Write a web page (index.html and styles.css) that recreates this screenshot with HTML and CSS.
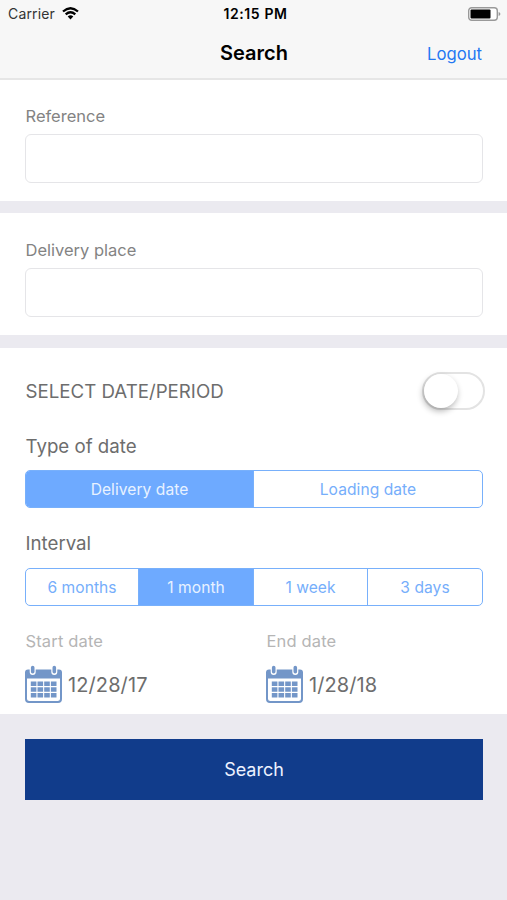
FILE: index.html
```html
<!DOCTYPE html>
<html lang="en">
<head>
<meta charset="utf-8">
<title>Search</title>
<link rel="stylesheet" href="styles.css">
</head>
<body>
<svg class="defs" width="0" height="0" aria-hidden="true">
  <symbol id="calendar" viewBox="0 0 37 38">
    <path fill-rule="evenodd" d="M3 4.500H34Q37 4.500 37 7.500V34Q37 38 33 38H4Q0 38 0 34V7.500Q0 4.500 3 4.500ZM2 13.500V33.500Q2 36 4.500 36H32.500Q35 36 35 33.500V13.500Z"/>
    <path class="ring-gap" d="M7.700 2.800V7M29.300 2.800V7"/>
    <path class="ring" d="M7.700 2.600V6.700M29.300 2.600V6.700"/>
    <path d="M5.800 16.400h5.600v4.500H5.800zm6.700 0h5.600v4.500h-5.600zm6.700 0h5.600v4.500h-5.600zm6.700 0h5.600v4.500h-5.600zM5.800 22.200h5.600v4.500H5.800zm6.700 0h5.600v4.500h-5.600zm6.700 0h5.600v4.500h-5.600zm6.700 0h5.600v4.500h-5.600zM5.800 28h5.600v4.500H5.800zm6.700 0h5.600v4.500h-5.600zm6.700 0h5.600v4.500h-5.600zm6.700 0h5.600v4.500h-5.600z"/>
  </symbol>
</svg>
<header class="header">
  <div class="status">
    <div class="carrier"><span>Carrier</span>
      <svg class="wifi" viewBox="0 0 17 13" width="17" height="13"><path d="M1 4.500Q8.500-2 16 4.500M3.700 7.400Q8.500 3.200 13.300 7.400" fill="none" stroke="#000" stroke-width="2.300"/><path d="M5.700 9.500Q8.500 7.100 11.300 9.500L8.500 12.400Z"/></svg>
    </div>
    <span class="time">12:15 PM</span>
    <svg class="battery" viewBox="0 0 33 14" width="33" height="14"><rect x=".7" y=".7" width="28.600" height="12.600" rx="3" fill="#fff" stroke="#999" stroke-width="1.400"/><rect x="2.500" y="2.500" width="20" height="9" rx="1"/><path d="M30.600 5Q32.400 5.300 32.400 7T30.600 9Z" fill="#999"/></svg>
  </div>
  <div class="nav">
    <h1 class="title">Search</h1>
    <a class="logout">Logout</a>
  </div>
</header>
<main>
  <section class="panel field">
    <label class="label" for="reference">Reference</label>
    <input class="input" id="reference" type="text">
  </section>
  <section class="panel field second">
    <label class="label" for="place">Delivery place</label>
    <input class="input" id="place" type="text">
  </section>
  <section class="panel period">
    <div class="period-head"><h2 class="heading caps">SELECT DATE/PERIOD</h2><div class="switch"><div class="knob"></div></div></div>
    <h2 class="heading type">Type of date</h2>
    <div class="segments two"><span class="segment selected">Delivery date</span><span class="segment">Loading date</span></div>
    <h2 class="heading interval">Interval</h2>
    <div class="segments four"><span class="segment">6 months</span><span class="segment selected">1 month</span><span class="segment">1 week</span><span class="segment">3 days</span></div>
    <div class="dates">
      <div><div class="date-label">Start date</div><div class="date"><svg class="calendar"><use href="#calendar"/></svg><span>12/28/17</span></div></div>
      <div><div class="date-label">End date</div><div class="date"><svg class="calendar"><use href="#calendar"/></svg><span>1/28/18</span></div></div>
    </div>
  </section>
  <button class="search">Search</button>
</main>
</body>
</html>
```
FILE: styles.css
```css
* { box-sizing: border-box; }
body { margin: 0; min-height: 900px; background: #ebeaf0; font-family: Inter, "Liberation Sans", sans-serif; color: #6d6d6d; }
h1, h2 { margin: 0; font-weight: 400; }
.defs { display: block; height: 0; }
.header { height: 80px; background: #f7f7f7; border-bottom: 2px solid #e6e6e6; color: #000; }
.status { height: 27px; padding: 0 6px 0 8px; display: grid; grid-template-columns: 1fr auto 1fr; align-items: center; }
.carrier { display: flex; align-items: center; gap: 7px; font-size: 14px; letter-spacing: .15px; color: #333; }
.time { font-size: 14px; font-weight: 600; letter-spacing: .6px; margin-left: 2px; }
.battery { justify-self: end; }
.nav { height: 51px; padding: 0 25px; display: grid; grid-template-columns: 1fr auto 1fr; align-items: center; }
.title { grid-column: 2; font-size: 20px; font-weight: 600; padding-left: 1px; }
.logout { justify-self: end; font-size: 16.700px; color: #2477f2; padding-top: 2px; }
.panel { background: #fff; padding: 0 24px 0 25px; }
.field { height: 121px; padding-top: 26px; margin-bottom: 12px; }
.second { height: 122px; padding-top: 27px; margin-bottom: 13px; }
.label { display: block; height: 28px; padding-left: .5px; line-height: 20px; font-size: 16.500px; color: #838383; }
.input { display: block; width: 458px; height: 49px; border: 1px solid #e5e5e8; border-radius: 6px; padding: 0 12px; font: inherit; outline: 0; }
.period { height: 366px; }
.period-head { height: 86px; display: flex; align-items: center; justify-content: space-between; }
.heading { font-size: 18.700px; line-height: 24px; padding-left: .5px; }
.caps { padding-top: 1px; }
.switch { width: 63px; height: 38px; border: 2px solid #e3e3e3; border-radius: 19px; margin-right: -2px; }
.knob { width: 34px; height: 34px; border-radius: 50%; background: #fff; box-shadow: -1px 3px 6px rgba(0,0,0,.3); }
.type { height: 36px; padding-top: 1px; }
.segments { height: 38px; display: grid; border: 1px solid #78b0fb; border-radius: 5px; overflow: hidden; font-size: 15.600px; letter-spacing: .05px; color: #76aefb; }
.two { grid-template-columns: 227px 1fr; }
.four { grid-template-columns: 112px 115px 114px 1fr; }
.segment { display: flex; align-items: center; justify-content: center; }
.segment + .segment { border-left: 1px solid #78b0fb; }
.segment.selected { background: #6eaaff; color: #e8f2ff; }
.interval { height: 37px; margin-top: 23px; padding-top: 1px; }
.dates { display: grid; grid-template-columns: 241px 1fr; margin-top: 24px; }
.date-label { font-size: 16.500px; line-height: 22px; letter-spacing: .15px; padding-left: .5px; color: #b5b5b5; }
.date { display: flex; align-items: center; gap: 6px; margin-top: 13px; height: 38px; font-size: 20px; letter-spacing: .1px; }
.date span { padding-top: 1px; }
.calendar { width: 37px; height: 38px; fill: #7396c8; }
.ring, .ring-gap { stroke-linecap: round; fill: none; }
.ring { stroke: #7396c8; stroke-width: 3.600px; }
.ring-gap { stroke: #fff; stroke-width: 6px; }
.search { display: block; width: 458px; height: 61px; margin: 25px 24px 25px 25px; border: 0; background: #113c8b; color: #edf2ff; font: 18px Inter, sans-serif; }
```
